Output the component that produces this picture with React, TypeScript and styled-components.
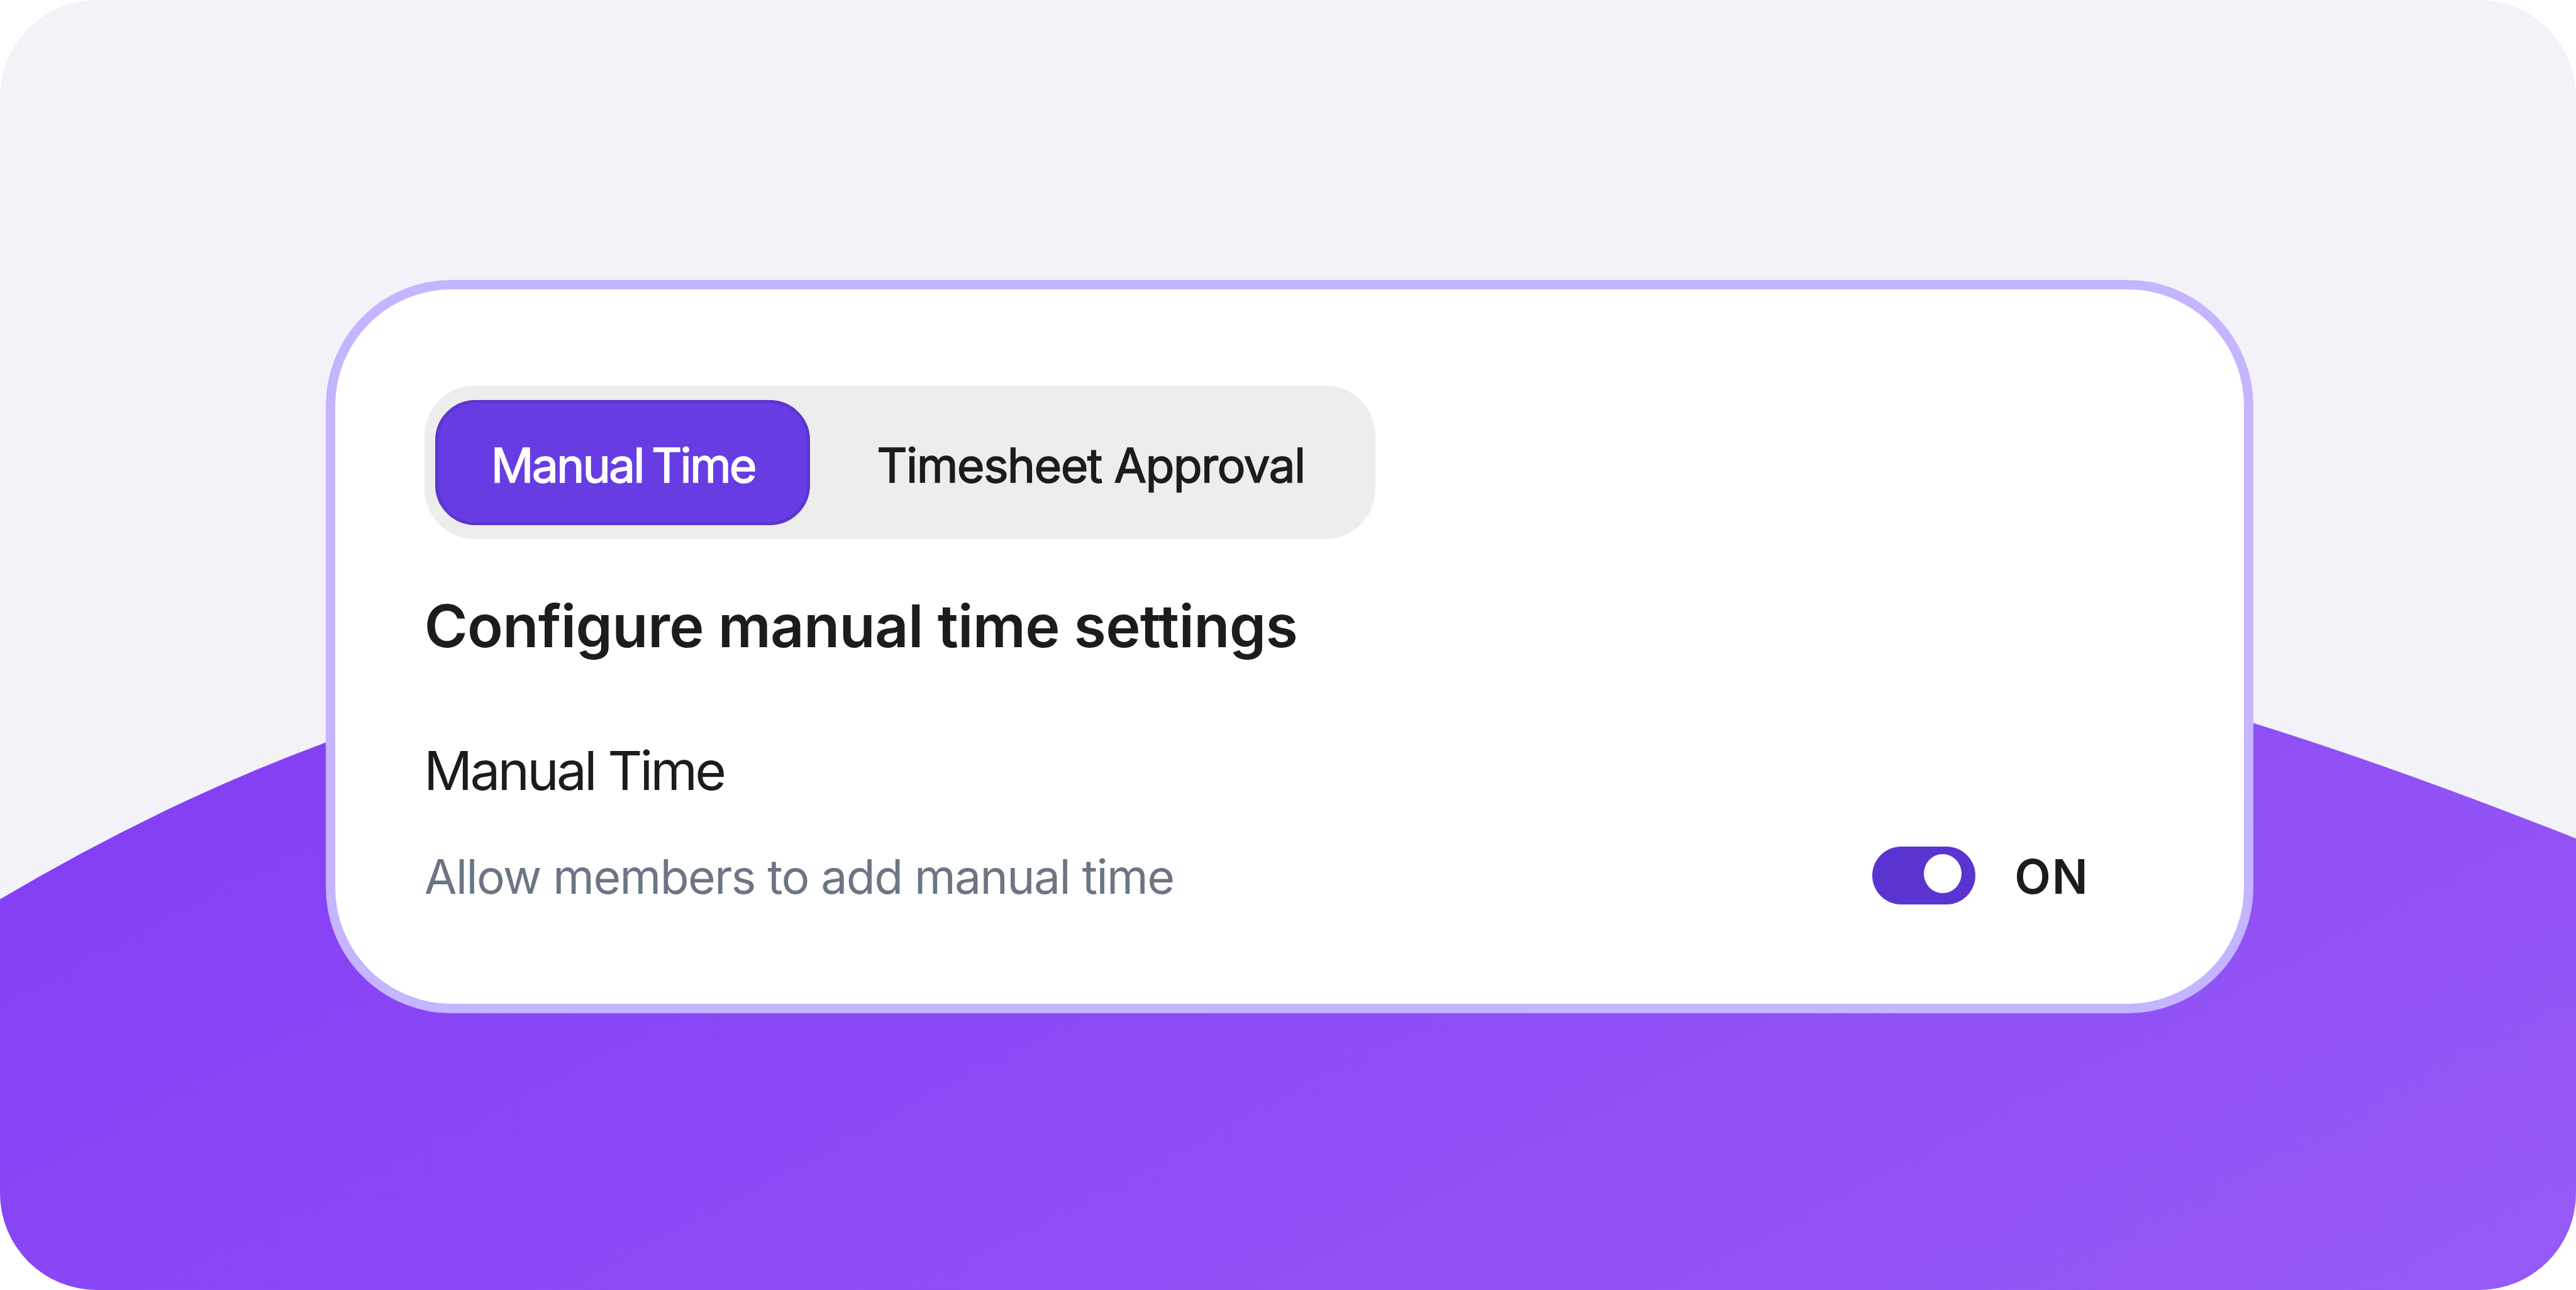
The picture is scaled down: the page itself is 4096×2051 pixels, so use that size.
import React, { useState } from 'react';
import styled, { createGlobalStyle } from 'styled-components';

const tabs = ['Manual Time', 'Timesheet Approval'];

export default function App() {
  const [activeTab, setActiveTab] = useState(tabs[0]);
  const [enabled, setEnabled] = useState(true);

  return (
    <Page>
      <GlobalStyle />
      <Hill />
      <Card>
        <TabList role="tablist">
          {tabs.map((tab) => (
            <Tab
              key={tab}
              role="tab"
              $active={tab === activeTab}
              onClick={() => setActiveTab(tab)}
            >
              {tab}
            </Tab>
          ))}
        </TabList>
        <Heading>Configure manual time settings</Heading>
        <SettingTitle>Manual Time</SettingTitle>
        <SettingRow>
          <Description>Allow members to add manual time</Description>
          <SwitchGroup>
            <Track role="switch" $on={enabled} onClick={() => setEnabled(!enabled)}>
              <Knob />
            </Track>
            <SwitchLabel>{enabled ? 'ON' : 'OFF'}</SwitchLabel>
          </SwitchGroup>
        </SettingRow>
      </Card>
    </Page>
  );
}

function Hill() {
  return (
    <HillSvg viewBox="0 0 6392 3200" preserveAspectRatio="none">
      <defs>
        <linearGradient id="hill" gradientUnits="userSpaceOnUse" x1="0" y1="2230" x2="1745" y2="5569">
          <stop offset="0" stopColor="#8540f5" />
          <stop offset="1" stopColor="#965af6" />
        </linearGradient>
      </defs>
      <path
        d="M0 2230.6Q407 1990 808 1842C2400 1250 3900 1260 5592 1793.8Q5942 1902.3 6392 2080V3200H0Z"
        fill="url(#hill)"
      />
    </HillSvg>
  );
}

const GlobalStyle = createGlobalStyle`
  body {
    margin: 0;
    background: #ffffff;
    font-family: Inter, sans-serif;
    color: #1c1c1c;
  }
`;

const Page = styled.div`
  position: relative;
  box-sizing: border-box;
  width: 4096px;
  height: 2051px;
  padding: 444.7px 512.6px 0 517.8px;
  border-radius: 154px;
  background: #f3f2f8;
  overflow: hidden;
`;

const HillSvg = styled.svg`
  position: absolute;
  inset: 0;
  width: 100%;
  height: 100%;
`;

const Card = styled.div`
  position: relative;
  box-sizing: border-box;
  height: 1166.3px;
  padding: 153.5px 142px 0;
  border: 15.4px solid #c5b4ff;
  border-radius: 200px;
  background: #ffffff;
`;

const TabList = styled.div`
  display: flex;
  box-sizing: border-box;
  width: 1511.8px;
  height: 244.1px;
  padding: 22.7px 16.9px;
  border-radius: 80px;
  background: #ededed;
`;

const Tab = styled.button<{ $active: boolean }>`
  box-sizing: border-box;
  height: 198.7px;
  padding: 9px 81.5px 0 84px;
  border: 5.8px solid ${({ $active }) => ($active ? '#5b35d0' : 'transparent')};
  border-radius: 64px;
  background: ${({ $active }) => ($active ? '#673de3' : 'transparent')};
  color: ${({ $active }) => ($active ? '#ffffff' : '#1c1c1c')};
  font-family: inherit;
  font-size: 75px;
  letter-spacing: ${({ $active }) => ($active ? '-2.8px' : '-1.6px')};
  word-spacing: ${({ $active }) => ($active ? '-5px' : '0')};
  text-align: left;
  white-space: nowrap;
  -webkit-text-stroke: 1.5px currentColor;

  &:first-child {
    width: 596.6px;
    margin-right: 17px;
  }
`;

const Heading = styled.h2`
  margin: 77.8px 0 113.8px;
  font-size: 93.5px;
  font-weight: 600;
  line-height: 120px;
  letter-spacing: -0.72px;
`;

const SettingTitle = styled.div`
  margin-bottom: 63.2px;
  font-size: 85.5px;
  line-height: 112px;
  letter-spacing: -3.85px;
  text-indent: -0.8px;
`;

const SettingRow = styled.div`
  display: flex;
  justify-content: space-between;
`;

const Description = styled.div`
  color: #6b7585;
  font-size: 75px;
  line-height: 100px;
  letter-spacing: -1.6px;
`;

const SwitchGroup = styled.div`
  display: flex;
  align-items: flex-start;
  gap: 61.8px;
  width: 449.5px;
`;

const Track = styled.button<{ $on: boolean }>`
  display: flex;
  justify-content: ${({ $on }) => ($on ? 'flex-end' : 'flex-start')};
  box-sizing: border-box;
  width: 164.5px;
  height: 91.2px;
  margin-top: 2.4px;
  padding: 12px 22px;
  border: 0;
  border-radius: 46px;
  background: ${({ $on }) => ($on ? '#5a34d0' : '#c9c9cf')};
`;

const Knob = styled.span`
  width: 60px;
  height: 62px;
  border-radius: 50%;
  background: #ffffff;
`;

const SwitchLabel = styled.span`
  font-size: 75px;
  font-weight: 600;
  line-height: 100px;
  letter-spacing: 2px;
`;
